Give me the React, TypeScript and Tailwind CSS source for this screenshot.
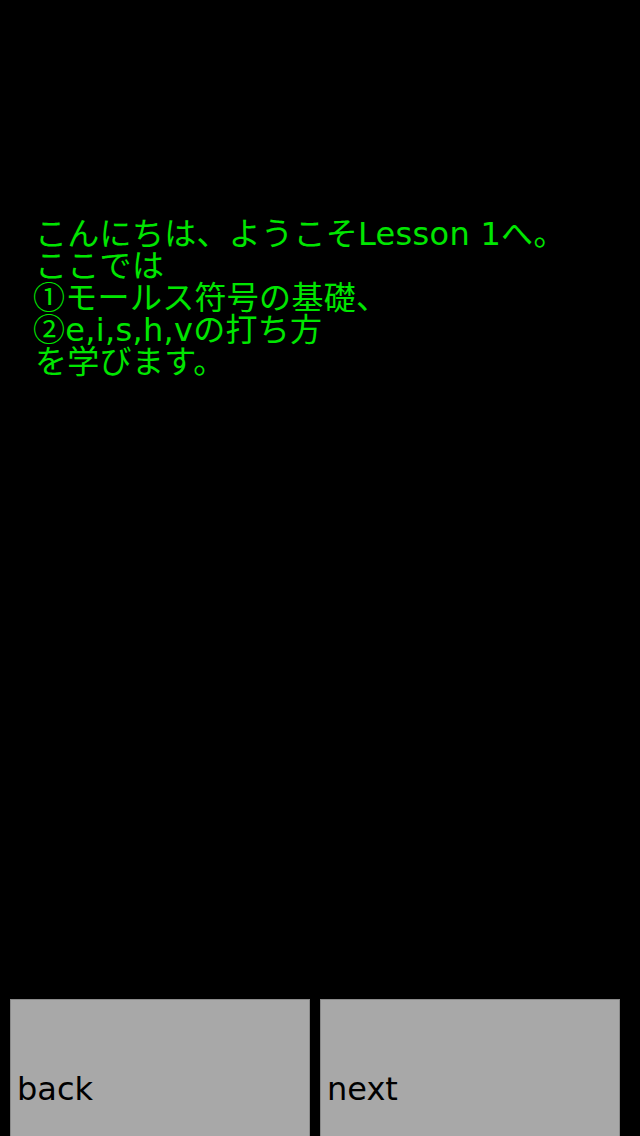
import React from "react";

// circled digits come from the CJK face so they render full-width like the reference;
// align-top keeps them from stretching the DejaVu line box
const Circled = ({ children }: { children: React.ReactNode }) => (
  <span className="inline-block align-top h-[32px] -mt-[3px] leading-[32px] font-['Noto_Sans_CJK_JP',sans-serif]">
    {children}
  </span>
);

export default function App() {
  return (
    <div className="w-[640px] h-[1136px] bg-black flex flex-col overflow-hidden font-['DejaVu_Sans','Noto_Sans_CJK_JP',sans-serif]">
      {/* lesson text */}
      <div className="flex-1 pt-[218px] pl-[35px] text-[32px] leading-[32px] tracking-[0.3px] text-[#00e600]">
        <div className="h-[32px]">こんにちは、ようこそLesson 1へ。</div>
        <div className="h-[32px]">ここでは</div>
        <div className="h-[32px] -ml-[2px]">
          <Circled>①</Circled>モールス符号の基礎、
        </div>
        <div className="h-[32px] -ml-[2px]">
          <Circled>②</Circled>e,i,s,h,vの打ち方
        </div>
        <div className="h-[32px]">を学びます。</div>
      </div>

      {/* bottom buttons */}
      <div className="flex gap-[10px] pl-[10px] h-[137px]">
        <button
          type="button"
          className="w-[300px] h-[180px] bg-[#a8a8a8] border border-[#8a8a8a] text-left pl-[6px] text-[32px] text-black"
        >
          back
        </button>
        <button
          type="button"
          className="w-[300px] h-[180px] bg-[#a8a8a8] border border-[#8a8a8a] text-left pl-[6px] text-[32px] text-black"
        >
          next
        </button>
      </div>
    </div>
  );
}
